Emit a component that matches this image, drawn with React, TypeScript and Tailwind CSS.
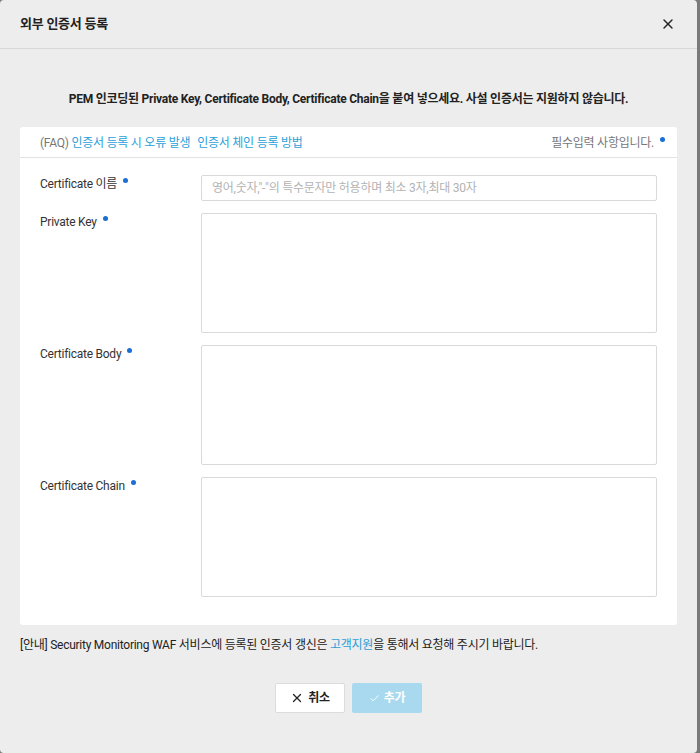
import { X, Check } from 'lucide-react';

const FONT = { fontFamily: 'Roboto, "Noto Sans CJK KR", sans-serif' };

// Required-field dot
function Dot() {
  return <span className="inline-block w-[5px] h-[5px] rounded-full bg-[#1a6fd6] ml-[6px] -translate-y-[5px]" />;
}

const AREAS = ['Private Key', 'Certificate Body', 'Certificate Chain'];

export default function App() {
  return (
    <div className="w-[700px] h-[753px] bg-[#7a7a7a] flex tracking-[-0.25px]" style={FONT}>
      <div className="w-[697px] h-[753px] bg-[#ededed] rounded-[4px] flex flex-col text-[#333]">
        {/* Header */}
        <div className="h-[49px] shrink-0 flex items-center justify-between pl-5 pr-[21px] border-b border-[#d9d9d9]">
          <h2 className="text-[13px] font-bold text-[#222]">외부 인증서 등록</h2>
          <X className="w-[16px] h-[16px] text-[#222]" strokeWidth={2} />
        </div>

        <p className="text-center text-[12px] font-bold text-[#222] mt-[41px] leading-[18px]">
          PEM 인코딩된 Private Key, Certificate Body, Certificate Chain을 붙여 넣으세요. 사설 인증서는 지원하지 않습니다.
        </p>

        {/* Form card */}
        <div className="mx-5 mt-[19px] bg-white rounded-[3px] h-[498px] flex flex-col">
          <div className="h-[31px] shrink-0 flex items-center justify-between pl-5 pr-3 pt-[2px] border-b border-[#e3e3e3] text-[12px]">
            <div>
              <span className="text-[#777]">(FAQ) </span>
              <span className="text-[#2b9fd8]">인증서 등록 시 오류 발생</span>
              <span className="text-[#2b9fd8] ml-[7px]">인증서 체인 등록 방법</span>
            </div>
            <div className="text-[#777]">
              필수입력 사항입니다.
              <Dot />
            </div>
          </div>

          <div className="pl-5 pr-5 pt-[17px] flex flex-col gap-3">
            <div className="flex items-start">
              <label className="w-[161px] shrink-0 text-[12px]">
                Certificate 이름
                <Dot />
              </label>
              <input
                className="flex-1 h-[26px] border border-[#d9d9d9] rounded-[2px] px-[10px] text-[12px] placeholder:text-[#b3b3b3] outline-none"
                placeholder={'영어,숫자,"-"의 특수문자만 허용하며 최소 3자,최대 30자'}
                style={FONT}
              />
            </div>
            {AREAS.map((label) => (
              <div key={label} className="flex items-start">
                <label className="w-[161px] shrink-0 text-[12px]">
                  {label}
                  <Dot />
                </label>
                <textarea className="flex-1 h-[120px] border border-[#d9d9d9] rounded-[2px] resize-none outline-none" />
              </div>
            ))}
          </div>
        </div>

        <p className="text-[12px] text-[#222] ml-5 mt-[11px]">
          [안내] Security Monitoring WAF 서비스에 등록된 인증서 갱신은 <span className="text-[#2b9fd8]">고객지원</span>을 통해서 요청해 주시기 바랍니다.
        </p>

        {/* Footer buttons */}
        <div className="flex justify-center gap-[7px] mt-[29px]">
          <button className="w-[70px] h-[30px] bg-white border border-[#dcdcdc] rounded-[2px] flex items-center justify-center gap-[4px] text-[12px] font-bold text-[#222]">
            <X className="w-[14px] h-[14px]" strokeWidth={2.2} />
            취소
          </button>
          <button className="w-[70px] h-[30px] bg-[#a9d9ee] rounded-[2px] flex items-center justify-center gap-[4px] text-[12px] font-bold text-white">
            <Check className="w-[11px] h-[11px]" strokeWidth={2} />
            추가
          </button>
        </div>
      </div>
    </div>
  );
}
